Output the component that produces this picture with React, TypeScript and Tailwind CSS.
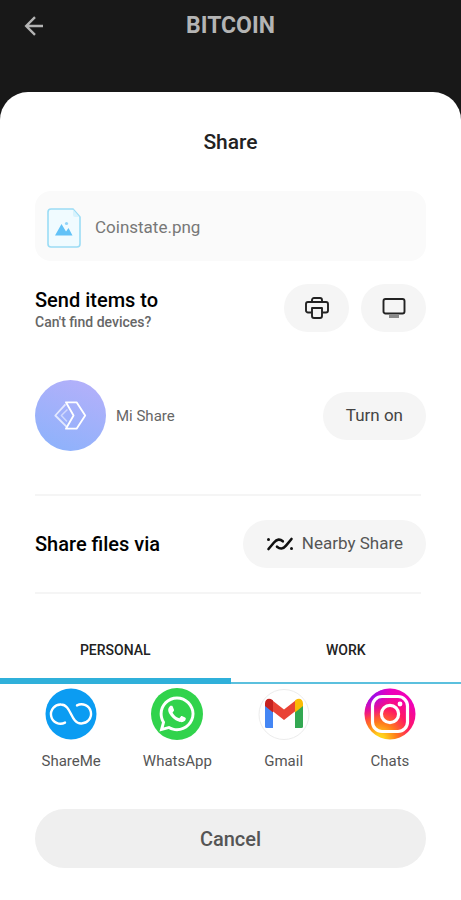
import { FaWhatsapp } from "react-icons/fa";
import type { ReactNode } from "react";

function BackIcon() {
  return (
    <svg viewBox="0 0 20 20" className="size-5" fill="none" stroke="currentColor" strokeWidth="2.4">
      <path d="M19 10H2.2M11 1.2 2.2 10l8.800 8.800" />
    </svg>
  );
}

function FileIcon() {
  return (
    <svg viewBox="0 0 34 40" className="h-10 w-[34px]" aria-hidden="true">
      <path
        d="M4 1h22l7 8v27a3 3 0 0 1-3 3H4a3 3 0 0 1-3-3V4a3 3 0 0 1 3-3Z"
        fill="#f0fbff"
        stroke="#9bdcf5"
        strokeWidth="1.600"
      />
      <path d="M26 1.500V7a2 2 0 0 0 2 2h4.500Z" fill="#d8f3fd" />
      <path d="M8 27.500l6.500-11.500 4.500 7.500 2.500-3.500 4 7.500Z" fill="#62c2f7" />
      <circle cx="19.500" cy="15.500" r="1.600" fill="#8fd4fa" />
    </svg>
  );
}

function PrinterIcon() {
  return (
    <svg viewBox="0 0 24 22" className="h-[22px] w-6" fill="none" stroke="#222" strokeWidth="1.900" strokeLinejoin="round">
      <path d="M7 5V3a2 2 0 0 1 2-2h6a2 2 0 0 1 2 2v2" />
      <path d="M6.500 15.500H3a2 2 0 0 1-2-2V7a2 2 0 0 1 2-2h18a2 2 0 0 1 2 2v6.500a2 2 0 0 1-2 2h-3.500" />
      <path d="M7 11h10v8a2 2 0 0 1-2 2H9a2 2 0 0 1-2-2Z" />
    </svg>
  );
}

function ScreenIcon() {
  return (
    <svg viewBox="0 0 24 22" className="h-[22px] w-6" fill="none">
      <rect x="1.500" y="2" width="21" height="14.500" rx="2" stroke="#222" strokeWidth="1.900" />
      <path d="M7 19.500h10" stroke="#8a8a8a" strokeWidth="3" />
    </svg>
  );
}

function MiShareIcon() {
  return (
    <svg viewBox="0 0 70 70" className="size-[71px]" aria-hidden="true">
      <defs>
        <linearGradient id="mi" x1="0.700" y1="0" x2="0.300" y2="1">
          <stop offset="0" stopColor="#b3b0fa" />
          <stop offset="1" stopColor="#8eb2fb" />
        </linearGradient>
      </defs>
      <circle cx="35" cy="35" r="35" fill="url(#mi)" />
      <g fill="none" stroke="#fff" strokeLinejoin="round">
        <path d="M30 24 20 35l11 11" strokeWidth="1.800" opacity=".7" />
        <path d="M32 29 26 35l5.500 6" strokeWidth="1.500" opacity=".5" />
        <path d="M30.500 22H41l8.500 13L41 48H30.500l7.500-13Z" strokeWidth="1.800" />
      </g>
    </svg>
  );
}

function NearbyIcon() {
  return (
    <svg viewBox="0 0 28 14" className="h-[14px] w-7" aria-hidden="true">
      <g fill="none" stroke="#111" strokeWidth="2.600" strokeLinecap="round">
        <path d="M2.500 12 8 5.500c3-3.600 6-3.600 8.800-1.200" />
        <path d="M11 9.700c3 2.600 6 2.600 9-1L25.500 2" />
      </g>
      <circle cx="2.500" cy="2.500" r="1.500" fill="#111" />
      <circle cx="25.500" cy="11.500" r="1.500" fill="#111" />
    </svg>
  );
}

function ShareMeIcon() {
  return (
    <svg viewBox="0 0 52 52" className="size-[52px]" aria-hidden="true">
      <circle cx="26" cy="26" r="25.500" fill="#0b9cf2" />
      <path
        d="M20 34.600A9.600 9.600 0 1 1 16 16.500c10.500 0 9.500 19 20 19a9.600 9.600 0 1 0-4-18.100"
        fill="none"
        stroke="#fff"
        strokeWidth="2.400"
        strokeLinecap="round"
      />
    </svg>
  );
}

function WhatsAppIcon() {
  return (
    <span className="grid size-[52px] place-items-center rounded-full bg-[#31d34c] text-white">
      <FaWhatsapp className="size-10" aria-hidden="true" />
    </span>
  );
}

function GmailIcon() {
  return (
    <svg viewBox="0 0 52 52" className="size-[52px]" aria-hidden="true">
      <circle cx="26" cy="26.500" r="25" fill="#fff" stroke="#ececec" />
      <path d="M7 17v21.500A1.500 1.500 0 0 0 8.500 40H15V20Z" fill="#4486f4" />
      <path d="M45 17v21.500a1.500 1.500 0 0 1-1.500 1.500H37V20Z" fill="#33a852" />
      <path d="M14.500 12.500 26 21.500l11.500-9V23L26 32 14.500 23Z" fill="#e94335" />
      <path d="M7 18v-2.500c0-5 4.500-6 7.500-3.400l.5.400V24.500Z" fill="#c5221f" />
      <path d="M45 18v-2.500c0-5-4.500-6-7.500-3.400l-.5.400V24.500Z" fill="#fabb05" />
    </svg>
  );
}

function InstagramIcon() {
  return (
    <svg viewBox="0 0 52 52" className="size-[52px]" aria-hidden="true">
      <defs>
        <radialGradient id="igWarm" cx="0.300" cy="1" r="0.950">
          <stop offset="0.100" stopColor="#ffd21a" />
          <stop offset="0.350" stopColor="#ff7a1c" />
          <stop offset="0.650" stopColor="#ff1763" />
          <stop offset="1" stopColor="#f000b8" />
        </radialGradient>
        <radialGradient id="igCool" cx="0.050" cy="0.050" r="0.550">
          <stop offset="0.200" stopColor="#8a10f5" />
          <stop offset="1" stopColor="#d800d8" stopOpacity="0" />
        </radialGradient>
      </defs>
      <circle cx="26" cy="26" r="25.500" fill="url(#igWarm)" />
      <circle cx="26" cy="26" r="25.500" fill="url(#igCool)" />
      <g fill="none" stroke="#fff" strokeWidth="3.200">
        <rect x="8.500" y="8.500" width="35" height="35" rx="9.500" />
        <circle cx="26" cy="26" r="8.600" />
      </g>
      <circle cx="36" cy="16" r="2.400" fill="#fff" />
    </svg>
  );
}

const apps: { name: string; icon: ReactNode }[] = [
  { name: "ShareMe", icon: <ShareMeIcon /> },
  { name: "WhatsApp", icon: <WhatsAppIcon /> },
  { name: "Gmail", icon: <GmailIcon /> },
  { name: "Chats", icon: <InstagramIcon /> },
];

export default function App() {
  return (
    <div className="min-h-screen bg-[#181818] font-['Roboto',sans-serif]">
      <header className="grid h-[92px] grid-cols-[1fr_auto_1fr] items-start px-6 pt-2 text-[#b4b4b4]">
        <button type="button" aria-label="Back" className="flex h-9 w-8 items-center">
          <BackIcon />
        </button>
        <h1 className="text-[23px] leading-9 font-bold">BITCOIN</h1>
      </header>

      <main className="min-h-[calc(100vh-92px)] rounded-t-[28px] bg-white pb-8">
        <h2 className="pt-9 text-center text-[21px] leading-7 font-medium text-[#222]">Share</h2>

        <div className="mx-[35px] mt-[35px] flex h-[70px] items-center gap-[14px] rounded-2xl bg-[#fafafa] px-3 pt-[3px]">
          <FileIcon />
          <p className="text-[17px] text-[#777]">Coinstate.png</p>
        </div>

        <section className="mx-[35px] mt-[23px] flex items-center justify-between">
          <div className="pt-[3px]">
            <h3 className="text-xl leading-6 font-medium text-black">Send items to</h3>
            <p className="text-sm leading-5 font-medium text-[#666]">Can't find devices?</p>
          </div>
          <div className="flex gap-3">
            <button type="button" aria-label="Print" className="grid h-12 w-[65px] place-items-center rounded-full bg-[#f5f5f5]">
              <PrinterIcon />
            </button>
            <button type="button" aria-label="Cast to screen" className="grid h-12 w-[65px] place-items-center rounded-full bg-[#f5f5f5]">
              <ScreenIcon />
            </button>
          </div>
        </section>

        <section className="mx-[35px] mt-12 flex items-center">
          <MiShareIcon />
          <p className="ml-[10px] pt-[2px] text-[15px] text-[#666]">Mi Share</p>
          <button type="button" className="ml-auto h-12 rounded-full bg-[#f5f5f5] px-[23px] text-[17px] text-[#444]">
            Turn on
          </button>
        </section>

        <hr className="mr-10 ml-[35px] mt-[43px] border-t-2 border-[#f5f5f5]" />

        <section className="mx-[35px] my-6 flex items-center justify-between">
          <h3 className="text-xl font-medium text-black">Share files via</h3>
          <button type="button" className="flex h-12 items-center gap-2 rounded-full bg-[#f5f5f5] px-[23px] text-[17px] text-[#555]">
            <NearbyIcon />
            Nearby Share
          </button>
        </section>

        <hr className="mr-10 ml-[35px] border-t-2 border-[#f5f5f5]" />

        <div role="tablist" className="mt-6 grid grid-cols-2 shadow-[inset_0_-2px_0_#5bc0de]">
          <button type="button" role="tab" aria-selected="true" className="h-[66px] border-b-6 border-[#2fb0da] pt-1 text-sm font-medium text-[#222]">
            PERSONAL
          </button>
          <button type="button" role="tab" aria-selected="false" className="h-[66px] border-b-6 border-transparent pt-1 text-sm font-medium text-[#222]">
            WORK
          </button>
        </div>

        <ul className="mx-[18px] mt-1 grid grid-cols-4">
          {apps.map((app) => (
            <li key={app.name}>
              <button type="button" className="flex w-full flex-col items-center gap-[11px] text-[15px] leading-5 text-[#555]">
                {app.icon}
                {app.name}
              </button>
            </li>
          ))}
        </ul>

        <div className="mx-[35px] mt-[38px]">
          <button type="button" className="h-[59px] w-full rounded-full bg-[#efefef] text-xl font-medium text-[#555]">
            Cancel
          </button>
        </div>
      </main>
    </div>
  );
}
